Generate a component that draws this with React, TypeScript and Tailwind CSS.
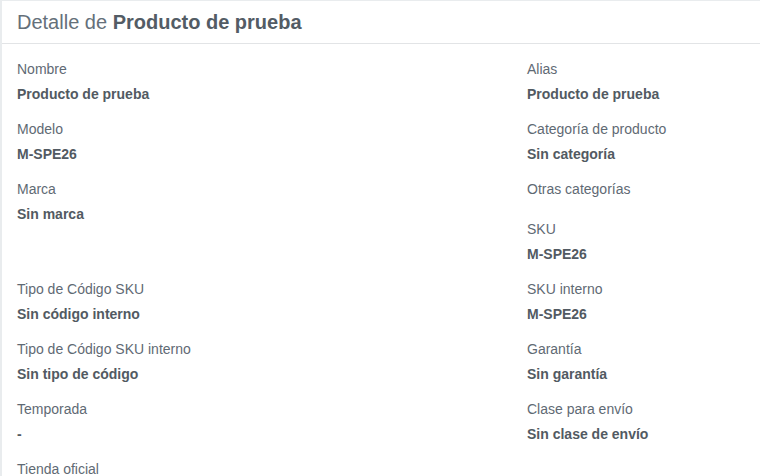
const left: { label: string; value: string; extra?: boolean }[] = [
  { label: "Nombre", value: "Producto de prueba" },
  { label: "Modelo", value: "M-SPE26" },
  { label: "Marca", value: "Sin marca", extra: true },
  { label: "Tipo de Código SKU", value: "Sin código interno" },
  { label: "Tipo de Código SKU interno", value: "Sin tipo de código" },
  { label: "Temporada", value: "-" },
  { label: "Tienda oficial", value: "" },
];

const right: { label: string; value: string }[] = [
  { label: "Alias", value: "Producto de prueba" },
  { label: "Categoría de producto", value: "Sin categoría" },
  { label: "Otras categorías", value: "" },
  { label: "SKU", value: "M-SPE26" },
  { label: "SKU interno", value: "M-SPE26" },
  { label: "Garantía", value: "Sin garantía" },
  { label: "Clase para envío", value: "Sin clase de envío" },
];

function Field({
  label,
  value,
  extra,
}: {
  label: string;
  value: string;
  extra?: boolean;
}) {
  return (
    <div className={extra ? "mb-10" : ""}>
      <div className="text-[14px] leading-5 text-[#5f6a74]">{label}</div>
      <div className="mt-[5px] mb-[15px] text-[14px] leading-5 font-bold text-[#525a62]">
        {value}
      </div>
    </div>
  );
}

export default function App() {
  return (
    <div className="h-[476px] w-[760px] overflow-hidden bg-[#e9ecee] pt-px pl-[2px] font-['Liberation_Sans',Arial,sans-serif]">
      <div className="h-full bg-white">
        {/* Header */}
        <div className="border-b border-[#e2e4e6] px-[15px] py-[7px]">
          <h1 className="text-[20px] leading-7 text-[#65707a]">
            Detalle de{" "}
            <span className="font-bold text-[#535c65]">Producto de prueba</span>
          </h1>
        </div>

        {/* Fields */}
        <div className="flex px-[15px] pt-[15px]">
          <div className="w-[510px] flex flex-col">
            {left.map((f) => (
              <Field key={f.label} {...f} />
            ))}
          </div>
          <div className="flex-1 flex flex-col">
            {right.map((f) =>
              f.value ? (
                <Field key={f.label} {...f} />
              ) : (
                <div key={f.label} className="mb-5">
                  <div className="text-[14px] leading-5 text-[#5f6a74]">
                    {f.label}
                  </div>
                </div>
              )
            )}
          </div>
        </div>
      </div>
    </div>
  );
}
